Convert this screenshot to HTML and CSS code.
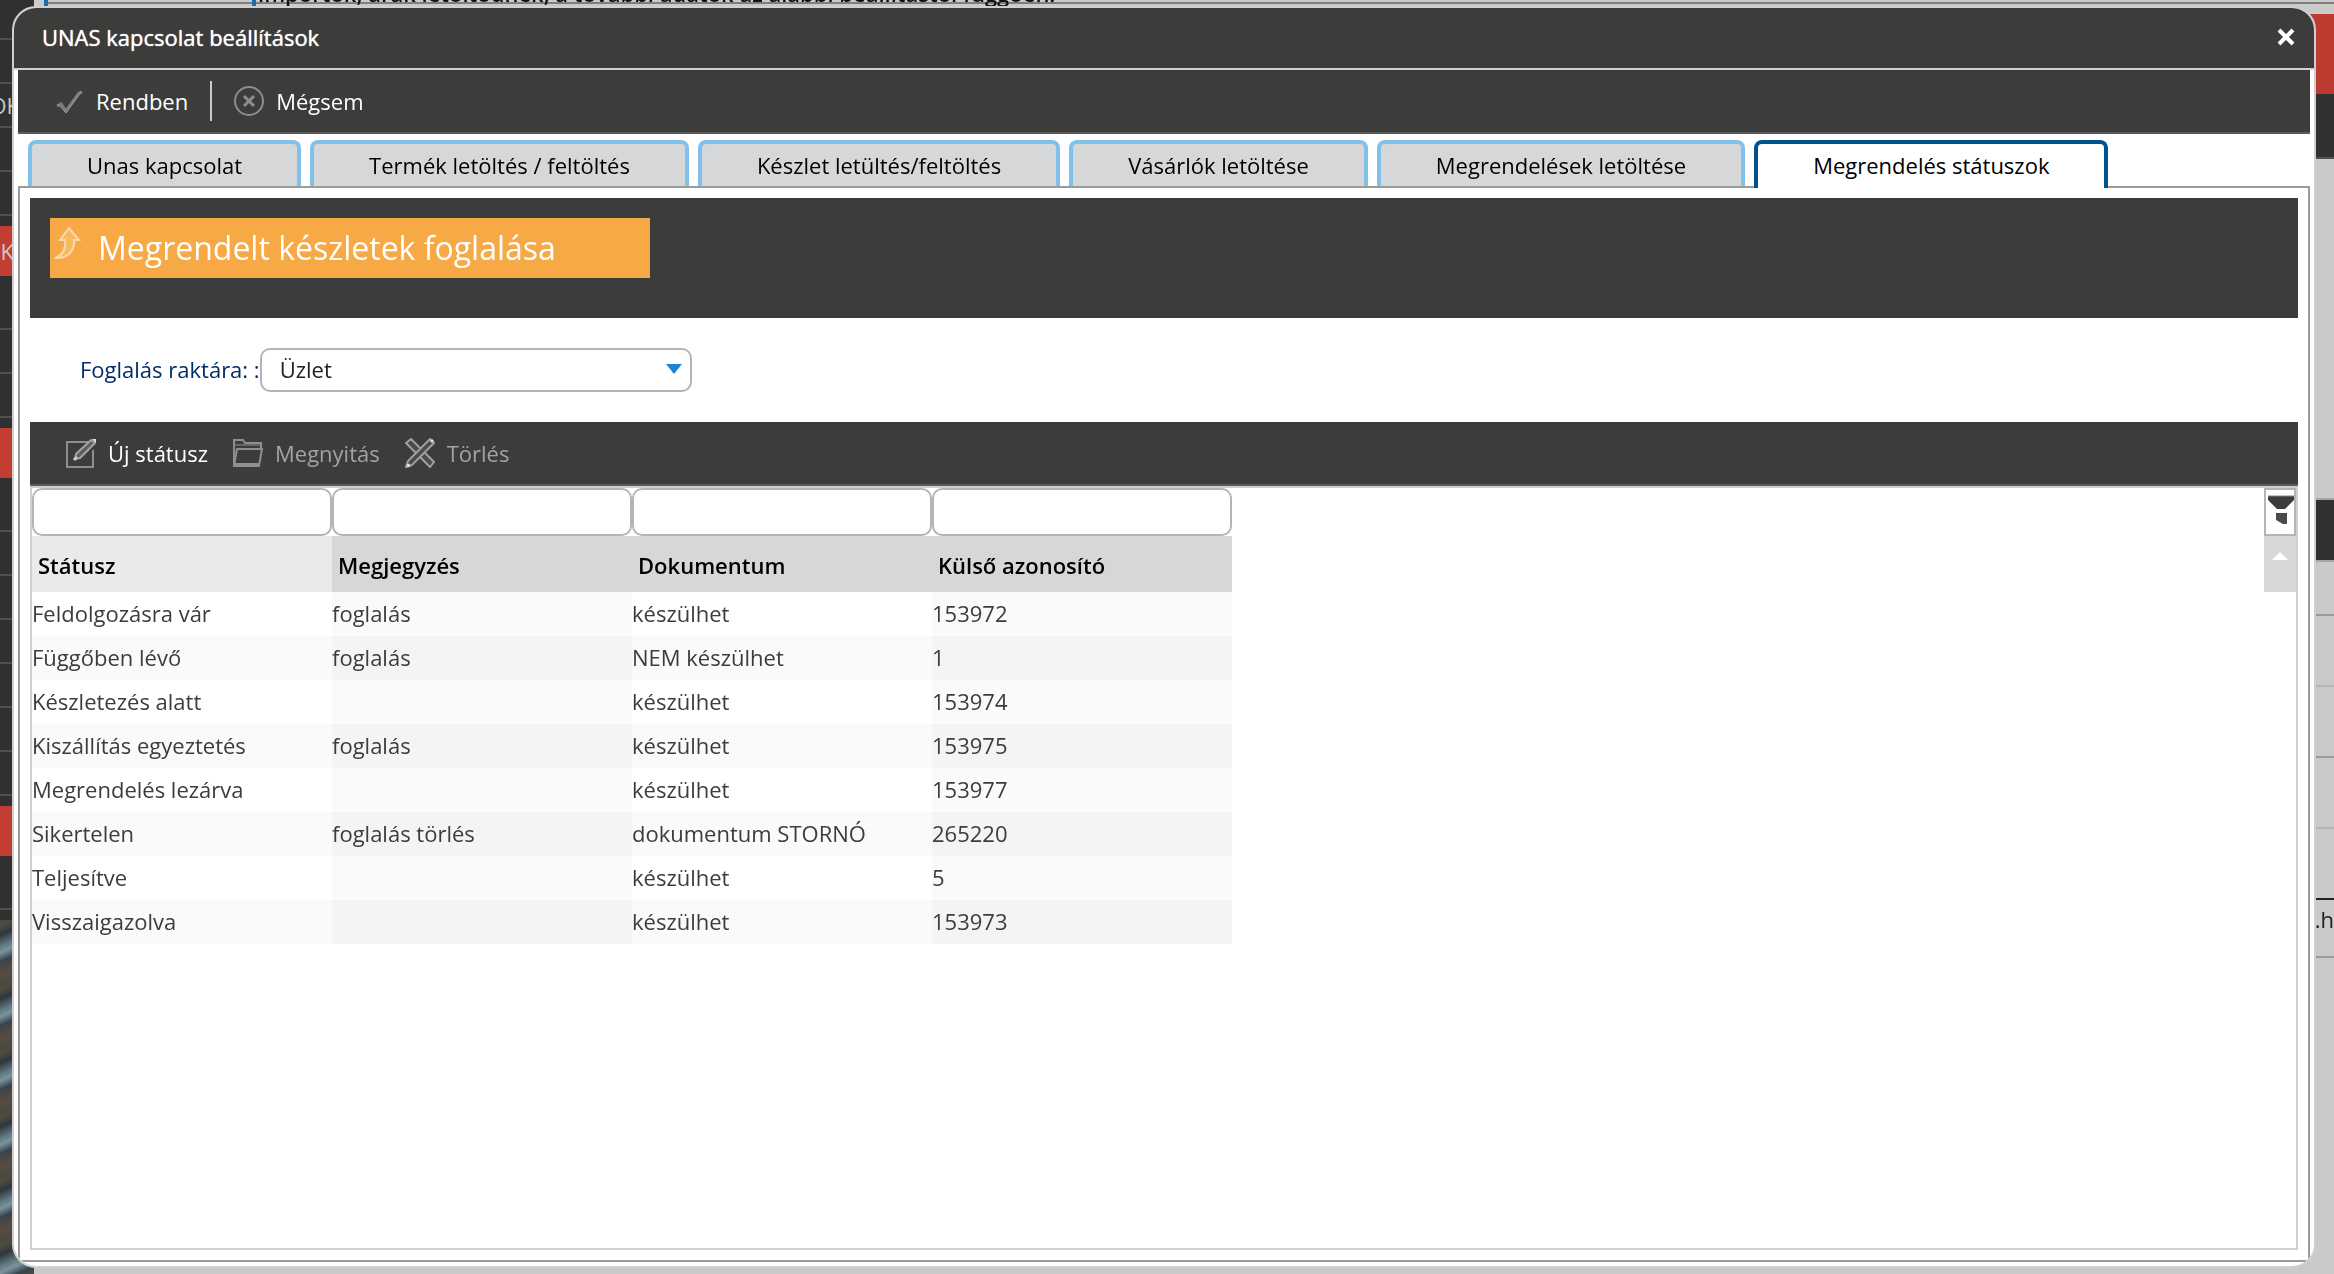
FILE: index.html
```html
<!DOCTYPE html>
<html lang="hu">
<head>
<meta charset="utf-8">
<title>UNAS kapcsolat beállítások</title>
<link rel="stylesheet" href="styles.css">
</head>
<body>
<div class="backdrop">
  <nav class="side">
    <div class="side-item side-first"></div>
    <div class="side-item"></div>
    <div class="side-item">OK</div>
    <div class="side-item"></div>
    <div class="side-item"></div>
    <div class="side-head">K</div>
    <div class="side-item side-lead"></div>
    <div class="side-item"></div>
    <div class="side-item"></div>
    <div class="side-head"></div>
    <div class="side-item side-lead"></div>
    <div class="side-item"></div>
    <div class="side-item"></div>
    <div class="side-item"></div>
    <div class="side-item"></div>
    <div class="side-item"></div>
    <div class="side-item"></div>
    <div class="side-head"></div>
    <div class="side-item side-lead"></div>
    <div class="side-photo"></div>
  </nav>
  <div class="under">
    <div class="under-note"><p>importok, árak letöltődnek, a további adatok az alábbi beállítástól függően.</p></div>
    <div class="under-red"></div>
    <div class="under-bar"></div>
    <div class="under-space"></div>
    <div class="under-bar under-bar-low"></div>
    <div class="under-row under-row-short"></div>
    <div class="under-row under-row-light"></div>
    <div class="under-row"></div>
    <div class="under-row under-row-light"></div>
    <div class="under-row under-row-black"></div>
    <div class="under-row under-row-text">1.h</div>
  </div>
</div>

<main class="dialog">
  <header class="title-bar">
    <h1>UNAS kapcsolat beállítások</h1>
    <button class="close" type="button" aria-label="Bezárás">
      <svg width="20" height="20" viewBox="0 0 20 20"><path d="M3 3l14 14M17 3L3 17" stroke="#fff" stroke-width="4"/></svg>
    </button>
  </header>
  <div class="dialog-body">
    <div class="toolbar actions">
      <button type="button">
        <svg width="30" height="30" viewBox="0 0 30 30" fill="none"><path d="M3 20l4-2 5 7L25 7l3-1" stroke="#7d7d7c" stroke-width="3"/><path d="M4 18l8 9L27 6" stroke="#9a9a99" stroke-width="1"/></svg>
        Rendben
      </button>
      <span class="divider"></span>
      <button type="button">
        <svg width="30" height="30" viewBox="0 0 30 30" fill="none"><circle cx="15" cy="15" r="14" stroke="#8d8d8c" stroke-width="2"/><path d="M10 10l10 10M20 10L10 20" stroke="#8d8d8c" stroke-width="3"/></svg>
        Mégsem
      </button>
    </div>
    <div class="tabs" role="tablist">
      <button class="tab" role="tab" type="button">Unas kapcsolat</button>
      <button class="tab" role="tab" type="button">Termék letöltés / feltöltés</button>
      <button class="tab" role="tab" type="button">Készlet letültés/feltöltés</button>
      <button class="tab" role="tab" type="button">Vásárlók letöltése</button>
      <button class="tab" role="tab" type="button">Megrendelések letöltése</button>
      <button class="tab tab-active" role="tab" type="button" aria-selected="true">Megrendelés státuszok</button>
    </div>
    <section class="panel">
      <div class="reserve">
        <button class="reserve-btn" type="button">
          <svg width="28" height="34" viewBox="0 0 28 34" fill="#f8b963" stroke="#fbd9ae" stroke-width="2"><path d="M15 2L25 14H20C21 24 14 33 1 32C9 29 12 23 11 14H6Z"/></svg>
          Megrendelt készletek foglalása
        </button>
      </div>
      <div class="field">
        <label for="store">Foglalás raktára: :</label>
        <div class="select-wrap">
          <select id="store"><option>Üzlet</option></select>
          <svg class="caret" width="16" height="10" viewBox="0 0 16 10"><path d="M0 0h16L8 10z" fill="#1c84d6"/></svg>
        </div>
      </div>
      <div class="toolbar grid-tools">
        <button type="button">
          <svg width="30" height="30" viewBox="0 0 30 30" fill="none"><path d="M22 4H1v25h26V12" stroke="#8f8f8e" stroke-width="2"/><path d="M9 21l1-5L25 2l4 3L14 20z" fill="#5e5e5d" stroke="#a3a3a2" stroke-width="2"/><path d="M8 22l3-3" stroke="#ccc" stroke-width="3"/><path d="M26 1h4v4z" fill="#ddd"/></svg>
          Új státusz
        </button>
        <button type="button" disabled>
          <svg width="30" height="30" viewBox="0 0 30 30" fill="none" stroke="#8f8f8e" stroke-width="2"><path d="M1 29V2h9l2 3h16v6" /><path d="M1 28L4 11h25l-3 17z"/><path d="M2 27h24" stroke-width="4"/><path d="M2 7h25" stroke="#666665"/></svg>
          Megnyitás
        </button>
        <button type="button" disabled>
          <svg width="30" height="30" viewBox="0 0 30 30" fill="#4b4b49" stroke="#a0a09f" stroke-width="2"><path d="M1 5l5-4 23 23-4 5z"/><path d="M25 1l4 4L7 27l-6 2 2-6z"/><path d="M26 2l2 2M2 28l3-1" stroke="#ddd" stroke-width="3"/></svg>
          Törlés
        </button>
      </div>
      <div class="grid">
        <table>
          <thead>
            <tr class="filters">
              <td><input type="text" aria-label="Státusz szűrő"></td>
              <td><input type="text" aria-label="Megjegyzés szűrő"></td>
              <td><input type="text" aria-label="Dokumentum szűrő"></td>
              <td><input type="text" aria-label="Külső azonosító szűrő"></td>
            </tr>
            <tr><th>Státusz</th><th>Megjegyzés</th><th>Dokumentum</th><th>Külső azonosító</th></tr>
          </thead>
          <tbody>
            <tr><td>Feldolgozásra vár</td><td>foglalás</td><td>készülhet</td><td>153972</td></tr>
            <tr><td>Függőben lévő</td><td>foglalás</td><td>NEM készülhet</td><td>1</td></tr>
            <tr><td>Készletezés alatt</td><td></td><td>készülhet</td><td>153974</td></tr>
            <tr><td>Kiszállítás egyeztetés</td><td>foglalás</td><td>készülhet</td><td>153975</td></tr>
            <tr><td>Megrendelés lezárva</td><td></td><td>készülhet</td><td>153977</td></tr>
            <tr><td>Sikertelen</td><td>foglalás törlés</td><td>dokumentum STORNÓ</td><td>265220</td></tr>
            <tr><td>Teljesítve</td><td></td><td>készülhet</td><td>5</td></tr>
            <tr><td>Visszaigazolva</td><td></td><td>készülhet</td><td>153973</td></tr>
          </tbody>
        </table>
        <div class="grid-side">
          <button class="funnel" type="button" aria-label="Szűrő">
            <svg width="28" height="36" viewBox="0 0 28 36"><path d="M2 1h26v4l-9 9h-8L2 5z" fill="#3c3c3a"/><path d="M2 1h26" stroke="#7b8a83" stroke-width="1"/><path d="M10 18h11v11h-4l-7-4z" fill="#4a4a4a"/></svg>
          </button>
          <button class="scroll-up" type="button" aria-label="Fel">
            <svg width="16" height="8" viewBox="0 0 16 8"><path d="M0 8L8 0l8 8z" fill="#fff"/></svg>
          </button>
        </div>
      </div>
    </section>
  </div>
</main>
</body>
</html>
```
FILE: styles.css
```css
* {
  box-sizing: border-box;
}

body {
  margin: 0;
  height: 100vh;
  overflow: hidden;
  font-family: "Open Sans", sans-serif;
  font-size: 22px;
  color: #3c3c3b;
  background: #cacaca;
}

button {
  font: inherit;
  color: inherit;
  border: 0;
  padding: 0;
  background: none;
  white-space: nowrap;
}

svg {
  display: block;
  flex: none;
}

/* Page below the dialog */
.backdrop {
  position: fixed;
  inset: 0;
  display: flex;
}

.side {
  width: 34px;
  flex: none;
  display: flex;
  flex-direction: column;
  overflow: hidden;
  background: #303030;
  color: #c8c8c8;
}

.side-item {
  flex: none;
  height: 44px;
  padding-right: 14px;
  display: flex;
  align-items: center;
  justify-content: flex-end;
  border-bottom: 2px solid #505050;
}

.side-first {
  height: 40px;
}

.side-lead {
  height: 54px;
}

.side-head {
  flex: none;
  height: 50px;
  margin-top: 10px;
  padding-right: 20px;
  display: flex;
  align-items: center;
  justify-content: flex-end;
  background: #c23e33;
}

.side-photo {
  flex: 1;
  margin-top: 10px;
  background: repeating-linear-gradient(155deg, #4b4a42 0 6px, #2f373b 14px, #5f7683 24px, #7d929d 30px, #38444b 38px, #5a4c40 50px, #4b4a42 58px);
}

.under {
  flex: 1;
  min-width: 0;
  display: flex;
  flex-direction: column;
}

.under-note {
  flex: none;
  height: 14px;
  margin-left: 10px;
  padding-left: 204px;
  position: relative;
  overflow: hidden;
  border-left: 4px solid #1a6cb0;
  background: linear-gradient(#cacaca 2px, #7e7e7e 2px 4px, #cacaca 4px);
  color: #111;
}

.under-note p {
  position: absolute;
  bottom: 8px;
  margin: 0;
  padding-left: 2px;
  line-height: 26px;
  font-weight: 600;
  border-left: 4px solid #1a6cb0;
}

.under-red {
  flex: none;
  height: 80px;
  background: #bd3c32;
}

.under-bar {
  flex: none;
  height: 65px;
  background: #30302f;
  border-bottom: 2px solid #505050;
}

.under-space {
  flex: none;
  height: 341px;
  border-bottom: 2px solid #a6a6a6;
}

.under-bar-low {
  height: 62px;
  border-color: #a6a6a6;
}

.under-row {
  flex: none;
  height: 71px;
  display: flex;
  justify-content: flex-end;
  border-bottom: 2px solid #9b9b9b;
}

.under-row-short {
  height: 54px;
}

.under-row-light {
  border-color: #b5b5b5;
}

.under-row-black {
  border-color: #222;
}

.under-row-text {
  height: 58px;
  line-height: 38px;
  color: #222;
}

/* Dialog */
.dialog {
  position: relative;
  height: calc(100vh - 12px);
  margin: 6px 18px 6px 12px;
  display: flex;
  flex-direction: column;
  overflow: hidden;
  border: 2px solid #d0d0d0;
  border-radius: 24px;
  background: #fff;
}

.title-bar {
  flex: none;
  height: 62px;
  padding: 0 18px 2px 28px;
  display: flex;
  align-items: center;
  justify-content: space-between;
  background: #3c3c3a;
  border-bottom: 2px solid #d0d0d0;
}

.title-bar h1 {
  margin: 0;
  font-size: 22px;
  font-weight: 400;
  color: #fff;
  text-shadow: 0 0 1px #fff;
}

.dialog-body {
  flex: 1;
  min-height: 0;
  padding: 0 4px;
  display: flex;
  flex-direction: column;
}

.toolbar {
  flex: none;
  height: 64px;
  display: flex;
  align-items: center;
  background: #3c3c3a;
  border-bottom: 2px solid #5c5b59;
  color: #fff;
}

.toolbar button {
  display: flex;
  align-items: center;
  gap: 12px;
}

.toolbar button:disabled {
  color: #a3a3a2;
}

.actions {
  padding: 0 36px;
  gap: 22px;
}

.divider {
  width: 2px;
  height: 40px;
  background: #c3ccd4;
}

.tabs {
  flex: none;
  padding: 6px 10px 0;
  display: flex;
  gap: 9px;
}

.tab {
  height: 46px;
  padding: 0 55px;
  color: #000;
  background: #d6d7d9;
  border: 4px solid #82c0ec;
  border-bottom: 0;
  border-radius: 8px 8px 0 0;
}

.tab-active {
  height: 48px;
  margin-bottom: -2px;
  padding-bottom: 2px;
  position: relative;
  background: #fff;
  border-color: #00528f;
}

.panel {
  flex: 1;
  min-height: 0;
  margin-bottom: 4px;
  padding: 10px;
  display: flex;
  flex-direction: column;
  border: 2px solid #9b9b9b;
}

.reserve {
  flex: none;
  height: 120px;
  padding: 20px;
  background: #3c3c3a;
}

.reserve-btn {
  width: 600px;
  height: 60px;
  padding: 0 4px 2px;
  display: flex;
  align-items: center;
  gap: 16px;
  background: #f6a944;
  color: #fff;
  font-size: 32px;
}

.reserve-btn svg {
  align-self: flex-start;
  margin-top: 8px;
}

.field {
  flex: none;
  height: 104px;
  padding-left: 50px;
  display: flex;
  align-items: center;
  color: #002d6b;
}

.field label {
  padding-bottom: 2px;
}

.select-wrap {
  position: relative;
  width: 432px;
}

.select-wrap select {
  display: block;
  width: 100%;
  height: 44px;
  padding: 0 18px 2px;
  appearance: none;
  font: inherit;
  color: #222;
  background: #fff;
  border: 2px solid #b5b5b5;
  border-radius: 10px;
}

.caret {
  position: absolute;
  right: 10px;
  top: 16px;
  pointer-events: none;
}

.grid-tools {
  padding: 0 36px;
  gap: 25px;
}

.grid {
  flex: 1;
  min-height: 0;
  display: flex;
  align-items: flex-start;
  justify-content: space-between;
  border: 2px solid #cfcfcf;
}

table {
  width: 1200px;
  table-layout: fixed;
  border-collapse: collapse;
}

td,
th {
  padding: 0 0 2px;
  height: 44px;
  line-height: 30px;
  text-align: left;
  white-space: nowrap;
}

th {
  height: 56px;
  padding: 2px 6px 0;
  font-weight: 600;
  color: #000;
  background: #d6d7d9;
}

th:first-child {
  background: #e9eaec;
}

.filters td {
  height: 48px;
  padding: 0;
}

.filters input {
  display: block;
  width: 100%;
  height: 48px;
  padding: 0 10px;
  font: inherit;
  background: #fff;
  border: 2px solid #b5b5b5;
  border-radius: 10px;
}

tbody td:nth-child(even) {
  background: #fafafa;
}

tbody tr:nth-child(even) {
  background: #fafafa;
}

tbody tr:nth-child(even) td:nth-child(even) {
  background: #f4f4f4;
}

.grid-side {
  width: 32px;
}

.funnel {
  display: block;
  width: 32px;
  height: 48px;
  padding-top: 2px;
  border: 2px solid #b5b5b5;
}

.scroll-up {
  display: flex;
  justify-content: center;
  width: 32px;
  height: 56px;
  padding-top: 16px;
  background: #d6d7d9;
}
```
